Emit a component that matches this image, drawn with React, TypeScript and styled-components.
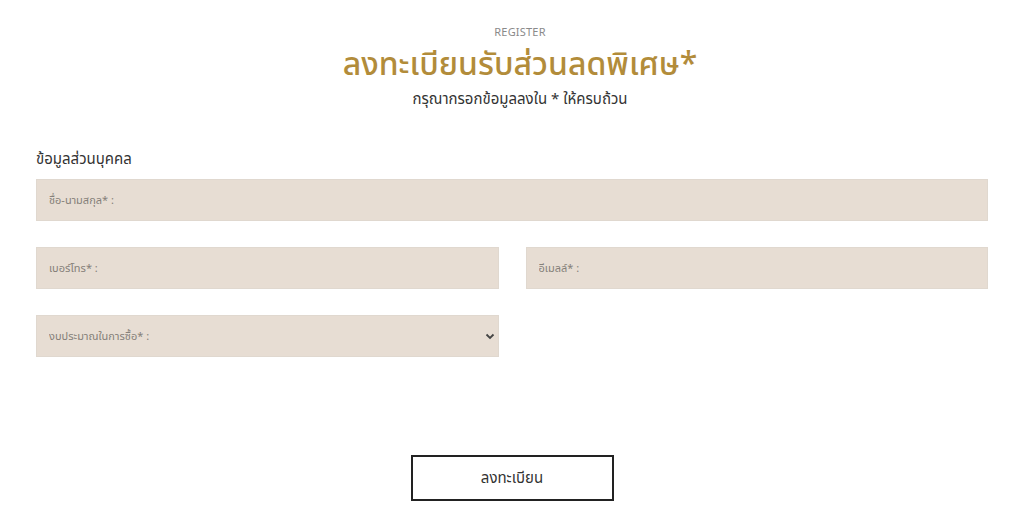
import React from "react";
import styled, { createGlobalStyle } from "styled-components";

const thai = `"Noto Sans Thai", "Noto Sans Thai Looped", "Noto Sans", "Liberation Sans", sans-serif`;

const Global = createGlobalStyle`
  html, body { margin: 0; padding: 0; background: #fff; }
  body { font-family: ${thai}; color: #333; }
  * { box-sizing: border-box; }
`;

const Page = styled.div`
  width: 1024px;
  height: 516px;
  padding: 26px 36px 0;
  display: flex;
  flex-direction: column;
`;

const Header = styled.header`
  display: flex;
  flex-direction: column;
  align-items: center;
  padding-left: 16px;
`;

const Kicker = styled.div`
  font-size: 11px;
  color: #8a8a8a;
  letter-spacing: 0.2px;
  line-height: 14px;
`;

const Title = styled.h1`
  margin: 5px 0 0;
  font-size: 32px;
  font-weight: 500;
  color: #b28c3a;
  line-height: 40px;
`;

const Subtitle = styled.p`
  margin: 5px 0 0;
  font-size: 15px;
  color: #333;
  line-height: 20px;
`;

const Form = styled.form`
  margin-top: 40px;
  display: flex;
  flex-direction: column;
`;

const SectionLabel = styled.div`
  font-size: 15px;
  color: #333;
  line-height: 20px;
  margin-bottom: 9px;
`;

const Grid = styled.div`
  display: grid;
  grid-template-columns: 1fr 1fr;
  column-gap: 27px;
  row-gap: 26px;
`;

const Input = styled.input<{ $full?: boolean }>`
  grid-column: ${(p) => (p.$full ? "1 / span 2" : "auto")};
  height: 42px;
  background: #e7ddd3;
  border: 1px solid #e0d8cf;
  padding: 0 12px;
  font-family: ${thai};
  font-size: 11px;
  color: #555;
  outline: none;
  &::placeholder { color: #858079; }
`;

const SelectWrap = styled.div`
  position: relative;
  height: 42px;
`;

const Select = styled.select`
  appearance: none;
  width: 100%;
  height: 100%;
  background: #e7ddd3;
  border: 1px solid #e0d8cf;
  padding: 0 12px;
  font-family: ${thai};
  font-size: 11px;
  color: #858079;
  outline: none;
`;

const Chevron = styled.svg`
  position: absolute;
  right: 4px;
  top: 18px;
  pointer-events: none;
`;

const Actions = styled.div`
  display: flex;
  justify-content: center;
  margin-top: 98px;
`;

const Button = styled.button`
  width: 203px;
  height: 46px;
  background: #fff;
  border: 2px solid #222;
  font-family: ${thai};
  font-size: 15px;
  color: #333;
  cursor: pointer;
`;

export default function App() {
  return (
    <>
      <Global />
      <Page>
        <Header>
          <Kicker>REGISTER</Kicker>
          <Title>ลงทะเบียนรับส่วนลดพิเศษ*</Title>
          <Subtitle>กรุณากรอกข้อมูลลงใน * ให้ครบถ้วน</Subtitle>
        </Header>
        <Form onSubmit={(e) => e.preventDefault()}>
          <SectionLabel>ข้อมูลส่วนบุคคล</SectionLabel>
          <Grid>
            <Input $full placeholder="ชื่อ-นามสกุล* :" />
            <Input placeholder="เบอร์โทร* :" />
            <Input placeholder="อีเมลล์* :" />
            <SelectWrap>
              <Select defaultValue="">
                <option value="" disabled>
                  งบประมาณในการซื้อ* :
                </option>
              </Select>
              <Chevron width="10" height="7" viewBox="0 0 10 7">
                <path d="M1.5 1.5 L5 5 L8.5 1.5" fill="none" stroke="#444" strokeWidth="1.8" />
              </Chevron>
            </SelectWrap>
          </Grid>
          <Actions>
            <Button type="submit">ลงทะเบียน</Button>
          </Actions>
        </Form>
      </Page>
    </>
  );
}
